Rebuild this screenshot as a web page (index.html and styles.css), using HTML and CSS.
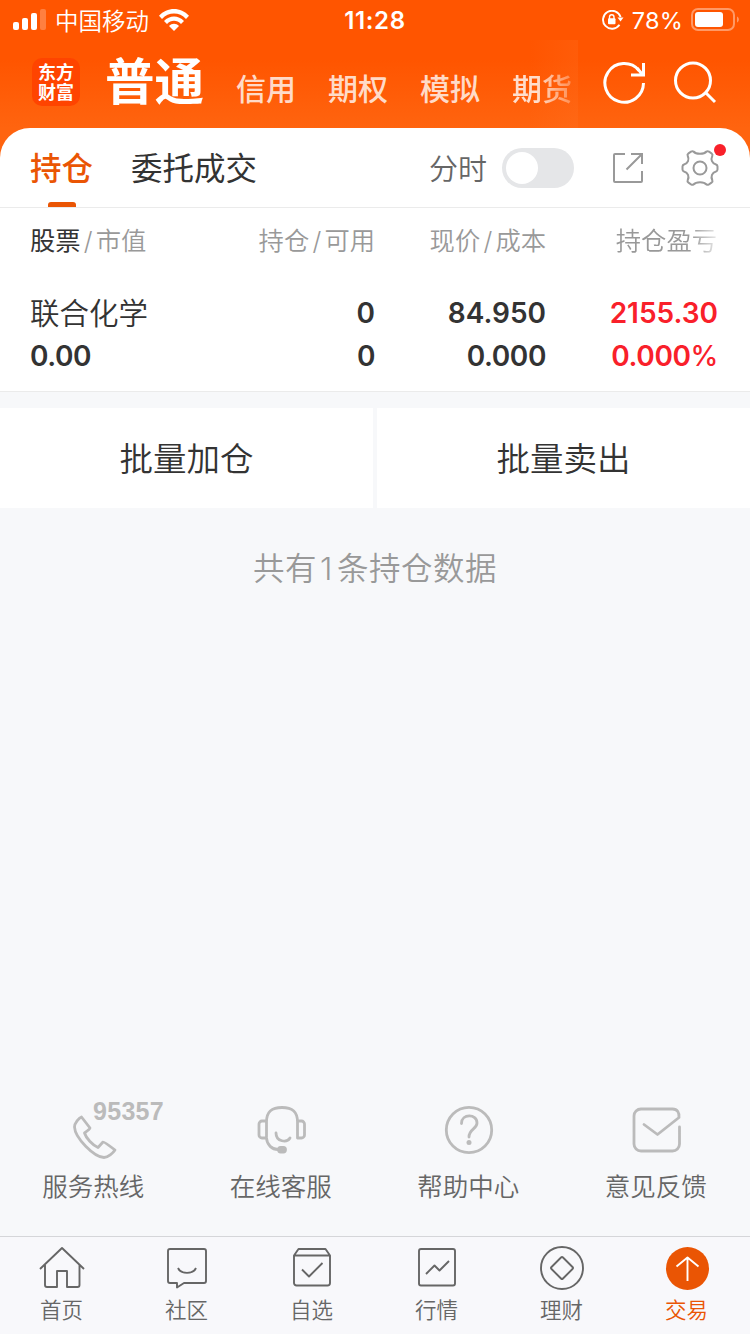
FILE: index.html
```
<!DOCTYPE html>
<html lang="zh-CN">
<head>
    <meta charset="UTF-8">
    <title>交易</title>
    <link rel="stylesheet" href="styles.css">
</head>
<body>
<div class="page">
    <div class="header">
        <div class="status">
            <svg class="signal" width="33" height="22" viewBox="0 0 33 22">
                <rect x="0" y="13" width="6" height="8" rx="2"/>
                <rect x="9" y="9" width="6" height="12" rx="2"/>
                <rect x="18" y="4" width="6" height="17" rx="2"/>
                <rect x="27" y="0" width="6" height="21" rx="2" opacity=".25"/>
            </svg>
            <span class="carrier">中国移动</span>
            <svg class="wifi" width="30" height="22" viewBox="0 0 30 22">
                <path d="M0 6.8C8-2.2 22-2.2 30 6.8L27 9.9C20.5 2.8 9.500 2.800 3 9.900Z"/>
                <path d="M5 12C10.500 6 19.500 6 25 12L22 15C18 10.800 12 10.800 8 15Z"/>
                <path d="M10 17C13 14 17 14 20 17L15 22Z"/>
            </svg>
            <span class="time">11:28</span>
            <svg class="lock" width="22" height="20" viewBox="0 0 22 20">
                <path d="M18.600 7A9 9 0 1 0 17.500 14.800" fill="none" stroke="#fff" stroke-width="1.900"/>
                <path d="M15.500 7.500h6l-3 4z"/>
                <rect x="6" y="8.300" width="7.500" height="6" rx="1"/>
                <path d="M7.500 9V7a2.250 2.250 0 0 1 4.500 0v2" fill="none" stroke="#fff" stroke-width="1.400"/>
            </svg>
            <span class="percent">78%</span>
            <svg class="battery" width="48" height="24" viewBox="0 0 48 24">
                <rect x="1" y="1" width="42" height="21" rx="6" fill="none" stroke="#fff" stroke-width="2" opacity=".4"/>
                <rect x="4" y="4" width="28" height="15" rx="3"/>
                <path d="M46 8.500c2.500 1 2.500 5 0 6z" opacity=".4"/>
            </svg>
        </div>
        <div class="nav">
            <div class="logo"><span>东方</span><span>财富</span></div>
            <h1>普通</h1>
            <ul class="nav-list">
                <li>信用</li>
                <li>期权</li>
                <li>模拟</li>
                <li class="fade">期货</li>
            </ul>
            <svg class="refresh" width="44" height="44" viewBox="0 0 44 44">
                <path d="M40.500 22A19.300 19.300 0 1 1 36 9.500" />
                <path d="M40.500 2v12H28M39.500 13.500L34 7"/>
            </svg>
            <svg class="search" width="44" height="44" viewBox="0 0 44 44">
                <circle cx="20" cy="19.500" r="17.500"/>
                <path d="M32.500 31.500L42 41"/>
            </svg>
        </div>
    </div>
    <div class="card">
        <div class="tabs">
            <span class="tab active">持仓</span>
            <span class="tab">委托成交</span>
            <span class="label">分时</span>
            <span class="switch"></span>
            <svg class="share" width="32" height="32" viewBox="0 0 32 32">
                <path d="M13 2H3a1 1 0 0 0-1 1v26a1 1 0 0 0 1 1h26a1 1 0 0 0 1-1V19M19 2h11v10M30 2L14.500 17.500"/>
            </svg>
            <div class="setting">
                <svg width="38" height="38" viewBox="0 0 38 38">
                    <path d="M12.500 2.500C15 5.500 23 5.500 25.500 2.500Q26.500 1.800 28 2.700L30.500 4.300Q32 5.300 31.300 6.800C29.500 10.500 31 14.500 35 15.500Q36.500 16 36.500 17.500V20.500Q36.500 22 35 22.500C31 23.500 29.500 27.500 31.300 31.200Q32 32.700 30.500 33.700L28 35.300Q26.500 36.200 25.500 35.500C23 32.500 15 32.500 12.500 35.500Q11.500 36.200 10 35.300L7.500 33.700Q6 32.700 6.700 31.200C8.500 27.500 7 23.500 3 22.500Q1.500 22 1.500 20.500V17.500Q1.500 16 3 15.500C7 14.500 8.500 10.500 6.700 6.800Q6 5.300 7.500 4.300L10 2.700Q11.500 1.800 12.500 2.500Z"/>
                    <circle cx="19" cy="19" r="6.500"/>
                </svg>
                <i class="dot"></i>
            </div>
        </div>
        <div class="grid thead">
            <span><b>股票</b><i>/</i>市值</span>
            <span>持仓<i>/</i>可用</span>
            <span>现价<i>/</i>成本</span>
            <span class="profit">持仓盈亏</span>
        </div>
        <div class="grid stock">
            <span class="name">联合化学</span>
            <span>0</span>
            <span>84.950</span>
            <span class="red">2155.30</span>
            <span class="second">0.00</span>
            <span class="second">0</span>
            <span class="second">0.000</span>
            <span class="second red">0.000<b>%</b></span>
        </div>
    </div>
    <div class="btns">
        <a>批量加仓</a>
        <a>批量卖出</a>
    </div>
    <p class="total">共有<i>1</i>条持仓数据</p>
    <div class="service">
        <div>
            <div class="hotline">
                <svg width="44" height="44" viewBox="0 0 44 44">
                    <path d="M8.500 2L17 13Q17 14 11.500 18C13 23 19.500 30 25 32.500L30 27Q31 26.500 42 35C40 38 35 42.500 31 42.500C21 42 2 23 1.500 12C1.500 8 6 3 8.500 2Z"/>
                </svg>
                <em>95357</em>
            </div>
            <p>服务热线</p>
        </div>
        <div>
            <svg width="50" height="50" viewBox="-1 0 50 50">
                <path d="M9.500 32V17C9.500 6 15 2.500 25 2.500S40.500 6 40.500 17V33H44.500a3 3 0 0 0 3-3V19a3 3 0 0 0-3-3h-4M9.500 16H5a3 3 0 0 0-3 3v11a3 3 0 0 0 3 3h4.500C10 40 15 44.500 21 44.500M19 28C19 37 30 38 33 33"/>
                <rect x="21.500" y="42.500" width="7" height="4.500" rx="2.200" fill="#bbb"/>
            </svg>
            <p>在线客服</p>
        </div>
        <div>
            <svg width="50" height="50" viewBox="0 0 50 50">
                <circle cx="25" cy="25" r="22.700"/>
                <path d="M17.500 18.500C17.500 8.500 33 8.500 33 18C33 24 25 24 25 32"/>
                <circle cx="25" cy="37.500" r="2.500" fill="#bbb" stroke="none"/>
            </svg>
            <p>帮助中心</p>
        </div>
        <div>
            <svg width="50" height="50" viewBox="-1 0 50 50">
                <path d="M47.500 22V39a7 7 0 0 1-7 7H9a7 7 0 0 1-7-7V11a7 7 0 0 1 7-7h31.500c5 0 7 4 6.500 8.500L25.500 29.500L12 19.500"/>
            </svg>
            <p>意见反馈</p>
        </div>
    </div>
    <div class="tabbar">
        <div>
            <svg width="46" height="46" viewBox="0 0 46 46">
                <path d="M1 24L23 3L45 24M6 20V40a2 2 0 0 0 2 2H18V26H28V42H38.500a2 2 0 0 0 2-2V20"/>
            </svg>
            <p>首页</p>
        </div>
        <div>
            <svg width="46" height="46" viewBox="0 0 46 46">
                <path d="M6 4H40a2 2 0 0 1 2 2V36a2 2 0 0 1-2 2H20L13 42.500V38H6a2 2 0 0 1-2-2V6a2 2 0 0 1 2-2ZM14 23C17 29.500 29 29.500 32 23"/>
            </svg>
            <p>社区</p>
        </div>
        <div>
            <svg width="46" height="46" viewBox="0 0 46 46">
                <path d="M5 10.500L9.500 4H36.500L41 10.500V38a2.500 2.500 0 0 1-2.500 2.500H7.500A2.500 2.500 0 0 1 5 38ZM5 10.500H41M13 24.500L20 31.500L33.500 18"/>
            </svg>
            <p>自选</p>
        </div>
        <div>
            <svg width="46" height="46" viewBox="0 0 46 46">
                <rect x="5" y="4" width="36" height="36.500" rx="2"/>
                <path d="M12 29L20.500 20.500L25.500 25.500L35 16"/>
            </svg>
            <p>行情</p>
        </div>
        <div>
            <svg width="46" height="46" viewBox="0 0 46 46">
                <circle cx="23" cy="23" r="21"/>
                <path d="M22 12.500Q23 11.500 24 12.500L33.500 22Q34.500 23 33.500 24L24 33.500Q23 34.500 22 33.500L12.500 24Q11.500 23 12.500 22Z"/>
            </svg>
            <p>理财</p>
        </div>
        <div class="on">
            <svg width="46" height="46" viewBox="0 0 46 46">
                <circle cx="23.500" cy="23.500" r="21.500"/>
                <path d="M23.500 36V12.500M12.500 21.500L23.500 12.500L34.500 21.500"/>
            </svg>
            <p>交易</p>
        </div>
    </div>
</div>
</body>
</html>
```
FILE: styles.css
```
* {
    padding: 0;
    margin: 0;
    box-sizing: border-box;
    font-style: normal;
}
body{
    font-family: Inter,"Noto Sans CJK SC",sans-serif;
    font-weight: 350;
    color: #333;
    background: #f7f8fa;
}
svg{
    display: block;
    flex-shrink: 0;
}
.page{
    width: 750px;
    height: 1334px;
    overflow: hidden;
    display: flex;
    flex-direction: column;
}
.header{
    height: 160px;
    background: linear-gradient(#ff5500 60px,#ff640f 128px);
    color: #fff;
}
.status{
    height: 40px;
    padding: 0 11px 0 13px;
    display: flex;
    align-items: center;
    line-height: 40px;
    font-size: 24px;
    fill: #fff;
}
.carrier{
    font-size: 23.5px;
    margin: 3px 10px 0 9px;
}
.time{
    font-weight: 600;
    margin: 2px 0 0 154px;
    width: 64px;
    text-align: center;
    letter-spacing: .6px;
}
.lock{
    margin-left: auto;
}
.percent{
    margin: 2px 8px 0 8px;
    font-size: 23.5px;
    font-weight: 400;
    letter-spacing: .2px;
}
.nav{
    height: 88px;
    padding: 0 33px 0 32px;
    display: flex;
    align-items: center;
}
.logo{
    width: 48px;
    height: 48px;
    margin-bottom: 4px;
    padding-top: 5px;
    border-radius: 10px;
    background: #ff4400;
    font-size: 18px;
    font-weight: 700;
    line-height: 19.5px;
    text-align: center;
}
.logo span{
    display: block;
}
.nav h1{
    width: 130px;
    padding-left: 25px;
    margin-bottom: 5px;
    font-size: 49.5px;
    font-weight: 700;
    line-height: 60px;
}
.nav-list{
    width: 368px;
    height: 88px;
    padding-left: 26px;
    display: flex;
    gap: 32px;
    list-style: none;
    font-size: 30px;
    font-weight: 500;
    line-height: 99px;
    color: rgba(255,255,255,.8);
    background: linear-gradient(90deg,transparent 320px,rgba(255,120,45,.2));
    white-space: nowrap;
}
.nav-list .fade{
    -webkit-mask-image: linear-gradient(90deg,#000 25px,rgba(0,0,0,.35));
    mask-image: linear-gradient(90deg,#000 25px,rgba(0,0,0,.35));
}
.refresh,.search{
    fill: none;
    stroke: #fff;
    stroke-width: 3;
    margin-bottom: 2px;
}
.refresh{
    margin-left: 25px;
}
.search{
    margin-left: 26px;
}
.card{
    margin-top: -32px;
    height: 264px;
    background: #fff;
    border-radius: 30px 30px 0 0;
    border-bottom: 1px solid #ebebeb;
}
.tabs{
    height: 80px;
    padding: 0 31px 0 30px;
    border-bottom: 1px solid #ebebeb;
    display: flex;
    align-items: center;
    font-size: 31.5px;
    line-height: 79px;
}
.tab{
    margin-right: 38px;
    padding-top: 2px;
    font-weight: 400;
}
.tab.active{
    color: #ea5504;
    font-weight: 500;
    position: relative;
}
.tab.active::after{
    content: "";
    position: absolute;
    left: 18px;
    bottom: 1px;
    width: 28px;
    height: 5px;
    border-radius: 3px 3px 0 0;
    background: #ea5504;
}
.label{
    margin-left: auto;
    padding-top: 4px;
    font-size: 29px;
    color: #666;
}
.switch{
    width: 72px;
    height: 40px;
    margin: 1px 38px 0 15px;
    padding: 4px;
    border-radius: 20px;
    background: #e5e6e8;
}
.switch::after{
    content: "";
    display: block;
    width: 32px;
    height: 32px;
    border-radius: 50%;
    background: #fff;
}
.share,.setting svg{
    fill: none;
    stroke: #999;
    stroke-width: 2;
    margin-top: 1px;
}
.setting{
    position: relative;
    margin-left: 37px;
}
.dot{
    position: absolute;
    right: -7px;
    top: -4px;
    width: 12px;
    height: 12px;
    border-radius: 50%;
    background: #f9202a;
}
.grid{
    display: grid;
    grid-template-columns: 175px 170px 171px 172px;
    padding: 0 32px 0 30px;
    text-align: right;
}
.grid span:nth-child(4n+1){
    text-align: left;
}
.thead{
    height: 83px;
    font-size: 25.300px;
    line-height: 66px;
    color: #999;
}
.thead b{
    font-weight: 400;
    color: #333;
}
.thead i{
    margin: 0 3.2px;
}
.profit{
    padding-right: 1px;
    -webkit-mask-image: linear-gradient(90deg,#000 145px,rgba(0,0,0,.2));
    mask-image: linear-gradient(90deg,#000 145px,rgba(0,0,0,.2));
}
.stock{
    font-size: 28px;
    font-weight: 600;
    line-height: 43px;
}
.stock span{
    padding-top: 1px;
}
.stock .second{
    padding-top: 0;
    letter-spacing: -.4px;
}
.second b{
    font-weight: 500;
}
.name{
    font-size: 29.500px;
    font-weight: 350;
}
.red{
    color: #f9202a;
}
.btns{
    display: grid;
    grid-template-columns: 373px 373px;
    gap: 4px;
    margin-top: 16px;
}
.btns a{
    background: #fff;
    height: 100px;
    line-height: 102px;
    font-size: 33.500px;
    text-align: center;
}
.total{
    padding-top: 36px;
    line-height: 50px;
    font-size: 31.500px;
    letter-spacing: .5px;
    text-align: center;
    color: #999;
}
.total i{
    margin: 0 4px 0 3px;
}
.service{
    margin-top: auto;
    height: 132px;
    display: flex;
    font-size: 25.500px;
    line-height: 36px;
    color: #666;
    text-align: center;
}
.service>div{
    flex: 1;
}
.service p{
    padding-right: 1px;
}
.service svg{
    margin: 1px auto 14px;
    fill: none;
    stroke: #bbb;
    stroke-width: 2.800;
    stroke-linejoin: round;
    stroke-linecap: round;
}
.hotline{
    position: relative;
    height: 65px;
    padding: 11px 0 0 73px;
}
.hotline svg{
    margin: 0;
}
.hotline em{
    position: absolute;
    left: 93px;
    top: -3px;
    font: bold 25px/20px "Liberation Sans",sans-serif;
    letter-spacing: .3px;
    color: #bbb;
}
.tabbar{
    height: 98px;
    padding-top: 8px;
    border-top: 1px solid #d5d6d9;
    background: #f8f8fb;
    display: flex;
    font-size: 21.500px;
    line-height: 39px;
    text-align: center;
    color: #666;
}
.tabbar>div{
    flex: 1;
    padding-right: 1px;
}
.tabbar p{
    padding-right: 1px;
}
.tabbar svg{
    margin: 0 auto;
    fill: none;
    stroke: #666;
    stroke-width: 1.900;
    stroke-linejoin: round;
}
.tabbar .on{
    color: #ea5504;
}
.tabbar .on circle{
    fill: #ea5504;
    stroke: none;
}
.tabbar .on path{
    stroke: #fff;
}
```
